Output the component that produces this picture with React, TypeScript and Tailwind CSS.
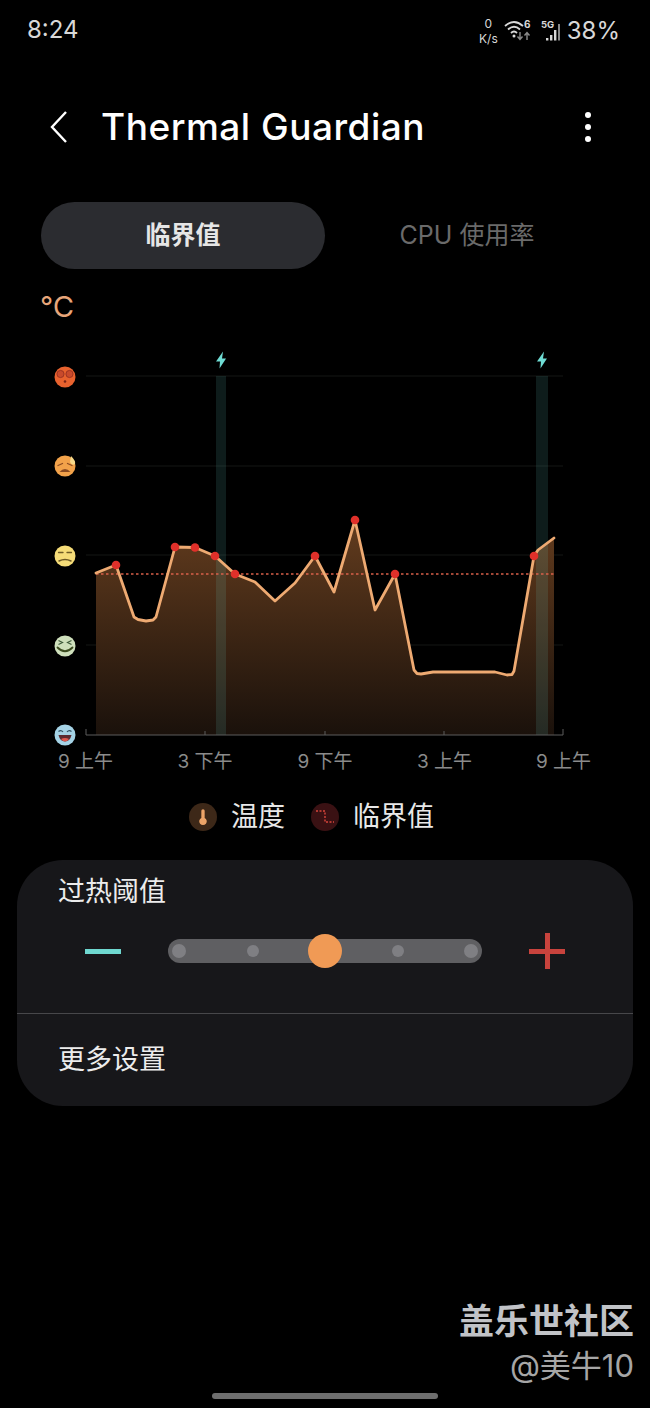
import React from 'react';

const FONT = '"Inter", "Noto Sans CJK SC", sans-serif';

// chart points, in page coordinates (viewBox starts at y=345)
const LINE: [number, number][] = [
  [96, 573], [116, 565], [134, 617], [138, 619.5], [146, 621], [153, 620], [156, 617], [175, 547], [195, 547.5],
  [215, 556], [235, 574], [255, 582], [275, 601], [295, 583], [315, 556], [334, 592], [355, 520], [375, 610],
  [395, 574], [414, 670], [417, 673.5], [421, 674], [433, 672], [495, 672], [507, 675], [512, 674.5], [514, 671],
  [534, 556], [538, 550], [554, 538],
];
const DOTS: [number, number][] = [
  [116, 565], [175, 547], [195, 547.5], [215, 556], [235, 574], [315, 556], [355, 520], [395, 574], [534, 556],
];
const GRID = [376, 466, 555, 645];
const TICKS = [86, 205, 325, 444, 563];
const X_LABELS = [
  { x: 85.5, label: '9 上午' },
  { x: 205, label: '3 下午' },
  { x: 325, label: '9 下午' },
  { x: 444.5, label: '3 上午' },
  { x: 563.5, label: '9 上午' },
];
const BANDS = [
  { x: 216, w: 10, bolt: 221 },
  { x: 536, w: 12, bolt: 542 },
];

const linePath = LINE.map(([x, y], i) => `${i === 0 ? 'M' : 'L'}${x} ${y}`).join(' ');
const areaPath = `${linePath} L554 735 L96 735 Z`;

const Bolt: React.FC<{ cx: number }> = ({ cx }) => (
  <path
    transform={`translate(${cx} 360)`}
    d="M2 -8.5 L-5 1.5 L-1 1.5 L-1.5 8.5 L5 -1.5 L1 -1.5 Z"
    fill="#6fdcd4"
  />
);

const Faces: React.FC = () => (
  <g>
    {/* dizzy hot */}
    <circle cx="65" cy="377" r="10.5" fill="#e8622e" />
    <circle cx="60.5" cy="374" r="3.6" fill="#c84a2c" stroke="#8f2c20" strokeWidth="0.8" />
    <circle cx="69.5" cy="374" r="3.6" fill="#c84a2c" stroke="#8f2c20" strokeWidth="0.8" />
    <circle cx="65" cy="381.5" r="1.3" fill="#7a2416" />
    {/* sweating */}
    <circle cx="65" cy="466" r="10.5" fill="#f2a24a" />
    <path d="M71 456 Q76 461 75 464 Q72 466 70 462 Z" fill="#f7d98a" />
    <path d="M58 465.5 L62.5 463.5 M72 465.5 L67.5 463.5" stroke="#8a4a20" strokeWidth="1.3" strokeLinecap="round" />
    <path d="M59.5 472 Q65 466 70.5 472 Z" fill="#8a4a20" />
    {/* annoyed */}
    <circle cx="65" cy="556" r="10.5" fill="#f5dc78" />
    <path d="M58.5 552.5 L63 552.5 M71.5 552.5 L67 552.5" stroke="#6d5a24" strokeWidth="1.3" strokeLinecap="round" />
    <path d="M59 561 Q65 558 71 561" stroke="#6d5a24" strokeWidth="1.5" fill="none" strokeLinecap="round" />
    {/* grinning */}
    <circle cx="65" cy="646" r="10.5" fill="#cfe0bc" />
    <path d="M58.5 640.5 L62.5 642.5 L58.5 644.5 M71.5 640.5 L67.5 642.5 L71.5 644.5" stroke="#3e5a3a" strokeWidth="1.2" fill="none" />
    <path d="M57.5 647.5 Q65 655 72.5 647.5" stroke="#3a4a1e" strokeWidth="1.8" fill="none" strokeLinecap="round" />
    {/* laughing */}
    <circle cx="65" cy="735" r="10.5" fill="#a5d3e6" />
    <path d="M58.5 731.5 Q61 729.5 63 732 M67 732 Q69 729.5 71.5 731.5" stroke="#2f4f60" strokeWidth="1.2" fill="none" />
    <path d="M58.5 735 L71.5 735 Q70 741.5 65 741.5 Q60 741.5 58.5 735 Z" fill="#5c2a30" />
    <path d="M61 739 Q65 737 69 739 Q67 741.5 65 741.5 Q63 741.5 61 739 Z" fill="#e0584e" />
  </g>
);

const TempChart: React.FC = () => (
  <svg viewBox="0 345 650 430" className="block w-[650px] h-[430px]">
    <defs>
      <linearGradient id="area" gradientUnits="userSpaceOnUse" x1="0" y1="520" x2="0" y2="735">
        <stop offset="0" stopColor="#633c1e" />
        <stop offset="1" stopColor="#1a110b" />
      </linearGradient>
    </defs>
    {GRID.map((y) => (
      <line key={y} x1="86" x2="563" y1={y} y2={y} stroke="#141615" strokeWidth="1" />
    ))}
    <path d={areaPath} fill="url(#area)" />
    {BANDS.map((b) => (
      <g key={b.x}>
        <rect x={b.x} y="376" width={b.w} height="359" fill="#6fdcd4" fillOpacity="0.13" />
        <Bolt cx={b.bolt} />
      </g>
    ))}
    <line x1="96" x2="554" y1="574" y2="574" stroke="#d9604a" strokeWidth="1.4" strokeDasharray="2.5 2.5" />
    <path d={linePath} fill="none" stroke="#eeaa72" strokeWidth="2.8" strokeLinejoin="round" strokeLinecap="round" />
    {DOTS.map(([x, y]) => (
      <circle key={x} cx={x} cy={y} r="4.3" fill="#e0302a" />
    ))}
    <path d="M86 729 V735 H563 V729" fill="none" stroke="#5c5c5c" strokeWidth="1" />
    {TICKS.slice(1, 4).map((x) => (
      <line key={x} x1={x} x2={x} y1="731" y2="735" stroke="#5c5c5c" strokeWidth="1" />
    ))}
    <Faces />
    {X_LABELS.map((l) => (
      <text key={l.x} x={l.x} y="768" textAnchor="middle" fontSize="19" fill="#8b8b8b" fontFamily={FONT}>
        {l.label}
      </text>
    ))}
  </svg>
);

const StatusIcons: React.FC = () => (
  <div className="flex items-center text-[#d8d8d8] -mt-[1px]">
    <div className="flex flex-col items-center text-[12px] leading-[15px] mr-[6px]">
      <span>0</span>
      <span>K/s</span>
    </div>
    <svg viewBox="0 0 32 24" className="w-[32px] h-[24px] mr-[5px]" fill="none">
      <path d="M1 7 Q10 -1 19 7 M4 10.5 Q10 5 16 10.5 M7 14 Q10 11 13 14" stroke="#d8d8d8" strokeWidth="1.8" />
      <circle cx="10" cy="17" r="1.5" fill="#d8d8d8" />
      <text x="20" y="9" fontSize="10" fontWeight="700" fill="#d8d8d8" fontFamily={FONT}>6</text>
      <path d="M16 13 V20 M13.5 17.5 L16 20.5 L18.5 17.5" stroke="#8a8a8a" strokeWidth="1.4" />
      <path d="M23 21 V14 M20.5 16.5 L23 13.5 L25.5 16.5" stroke="#8a8a8a" strokeWidth="1.4" />
    </svg>
    <svg viewBox="0 0 22 24" className="w-[22px] h-[24px] mr-[4px]">
      <text x="0" y="9" fontSize="9.5" fontWeight="700" fill="#d8d8d8" fontFamily={FONT}>5G</text>
      <rect x="5" y="19" width="2.4" height="2.5" fill="#d8d8d8" />
      <rect x="9" y="16" width="2.4" height="5.5" fill="#d8d8d8" />
      <rect x="13" y="11" width="2.4" height="10.5" fill="#d8d8d8" />
      <rect x="17" y="5" width="2" height="16.5" fill="#8a8a8a" />
    </svg>
    <span className="text-[24px] leading-none">38%</span>
  </div>
);

export default function App() {
  return (
    <div className="w-[650px] h-[1408px] bg-black text-white flex flex-col overflow-hidden" style={{ fontFamily: FONT }}>
      {/* STATUS BAR */}
      <div className="h-[60px] flex items-start justify-between pl-[27px] pr-[30px] pt-[17px] text-[#d8d8d8]">
        <span className="text-[24px] leading-[24px] mt-[1px]">8:24</span>
        <StatusIcons />
      </div>

      {/* HEADER */}
      <div className="h-[134px] flex items-center pl-[50px] pr-[59px]">
        <svg viewBox="0 0 18 32" className="w-[18px] h-[32px]" fill="none">
          <path d="M16 1 L2 16 L16 31" stroke="#ffffff" strokeWidth="2.4" />
        </svg>
        <h1 className="ml-[33px] flex-1 text-[37px] leading-none font-medium tracking-[0.5px] -mt-[1px]">Thermal Guardian</h1>
        <div className="flex flex-col gap-[6px]">
          <span className="w-[6px] h-[6px] rounded-full bg-white" />
          <span className="w-[6px] h-[6px] rounded-full bg-white" />
          <span className="w-[6px] h-[6px] rounded-full bg-white" />
        </div>
      </div>

      {/* TABS */}
      <div className="mt-[8px] mx-[41px] flex">
        <div className="w-[284px] h-[67px] rounded-full bg-[#2b2c30] flex items-center justify-center text-[25px] font-bold text-[#e6e6e6]">
          临界值
        </div>
        <div className="w-[284px] h-[67px] flex items-center justify-center text-[25px] text-[#6a6a6a]">
          CPU 使用率
        </div>
      </div>

      {/* CHART */}
      <div className="h-[26px] mt-[24px] pl-[40px] flex items-center text-[29px] leading-none text-[#e8a67a]">℃</div>
      <div className="mt-[26px]">
        <TempChart />
      </div>

      {/* LEGEND */}
      <div className="mt-[28px] h-[28px] flex items-center pl-[189px] text-[27px] text-[#e8e8e8]">
        <div className="w-[28px] h-[28px] rounded-full bg-[#3d2818] flex items-center justify-center">
          <svg viewBox="0 0 12 22" className="w-[10px] h-[19px]">
            <path d="M6 1 a2 2 0 0 1 2 2 V11.5 a4.5 4.5 0 1 1 -4 0 V3 A2 2 0 0 1 6 1 Z" fill="#eda468" />
          </svg>
        </div>
        <span className="ml-[14px] w-[80px]">温度</span>
        <div className="w-[28px] h-[28px] rounded-full bg-[#3a1113] flex items-center justify-center">
          <svg viewBox="0 0 20 16" className="w-[20px] h-[16px]" fill="none">
            <path d="M1 2 H10 V13 H19" stroke="#d8453c" strokeWidth="1.4" strokeDasharray="2 1.5" />
          </svg>
        </div>
        <span className="ml-[14px]">临界值</span>
      </div>

      {/* SETTINGS CARD */}
      <div className="mt-[29px] mx-[17px] h-[246px] rounded-[46px] bg-[#17171a] flex flex-col">
        <div className="h-[153px] flex flex-col">
          <div className="pl-[41px] pt-[13px] text-[27px] leading-[38px] text-[#ececec]">过热阈值</div>
          <div className="mt-[22px] flex items-center pl-[68px]">
            <div className="w-[36px] h-[5px] bg-[#6fd8d0]" />
            <div className="ml-[47px] relative w-[314px] h-[24px] rounded-full bg-[#5f5f62] flex items-center justify-between px-[4px]">
              <span className="w-[14px] h-[14px] rounded-full bg-[#7f7f83]" />
              <span className="w-[12px] h-[12px] rounded-full bg-[#7f7f83]" />
              <span className="w-[12px] h-[12px] rounded-full bg-[#7f7f83] invisible" />
              <span className="w-[12px] h-[12px] rounded-full bg-[#7f7f83]" />
              <span className="w-[14px] h-[14px] rounded-full bg-[#7f7f83]" />
              <span className="absolute left-[140px] top-[-5px] w-[34px] h-[34px] rounded-full bg-[#f09a55]" />
            </div>
            <div className="ml-[47px] relative w-[36px] h-[36px]">
              <span className="absolute left-0 top-[16px] w-[36px] h-[5px] bg-[#c8433d]" />
              <span className="absolute left-[16px] top-0 w-[5px] h-[36px] bg-[#c8433d]" />
            </div>
          </div>
        </div>
        <div className="h-[1px] bg-[#47474a]" />
        <div className="flex-1 flex items-center pl-[41px] text-[27px] text-[#ececec]">更多设置</div>
      </div>

      {/* WATERMARK */}
      <div className="mt-[193px] pr-[16px] flex flex-col items-end">
        <span className="text-[35px] leading-[44px] font-bold text-[#c1c3c7]">盖乐世社区</span>
        <span className="mt-[5px] text-[31px] leading-[36px] text-[#a6a6a6]">@美牛10</span>
      </div>

      {/* HOME BAR */}
      <div className="mt-[9px] flex justify-center">
        <div className="w-[226px] h-[6px] rounded-full bg-[#6e6e6e]" />
      </div>
    </div>
  );
}
